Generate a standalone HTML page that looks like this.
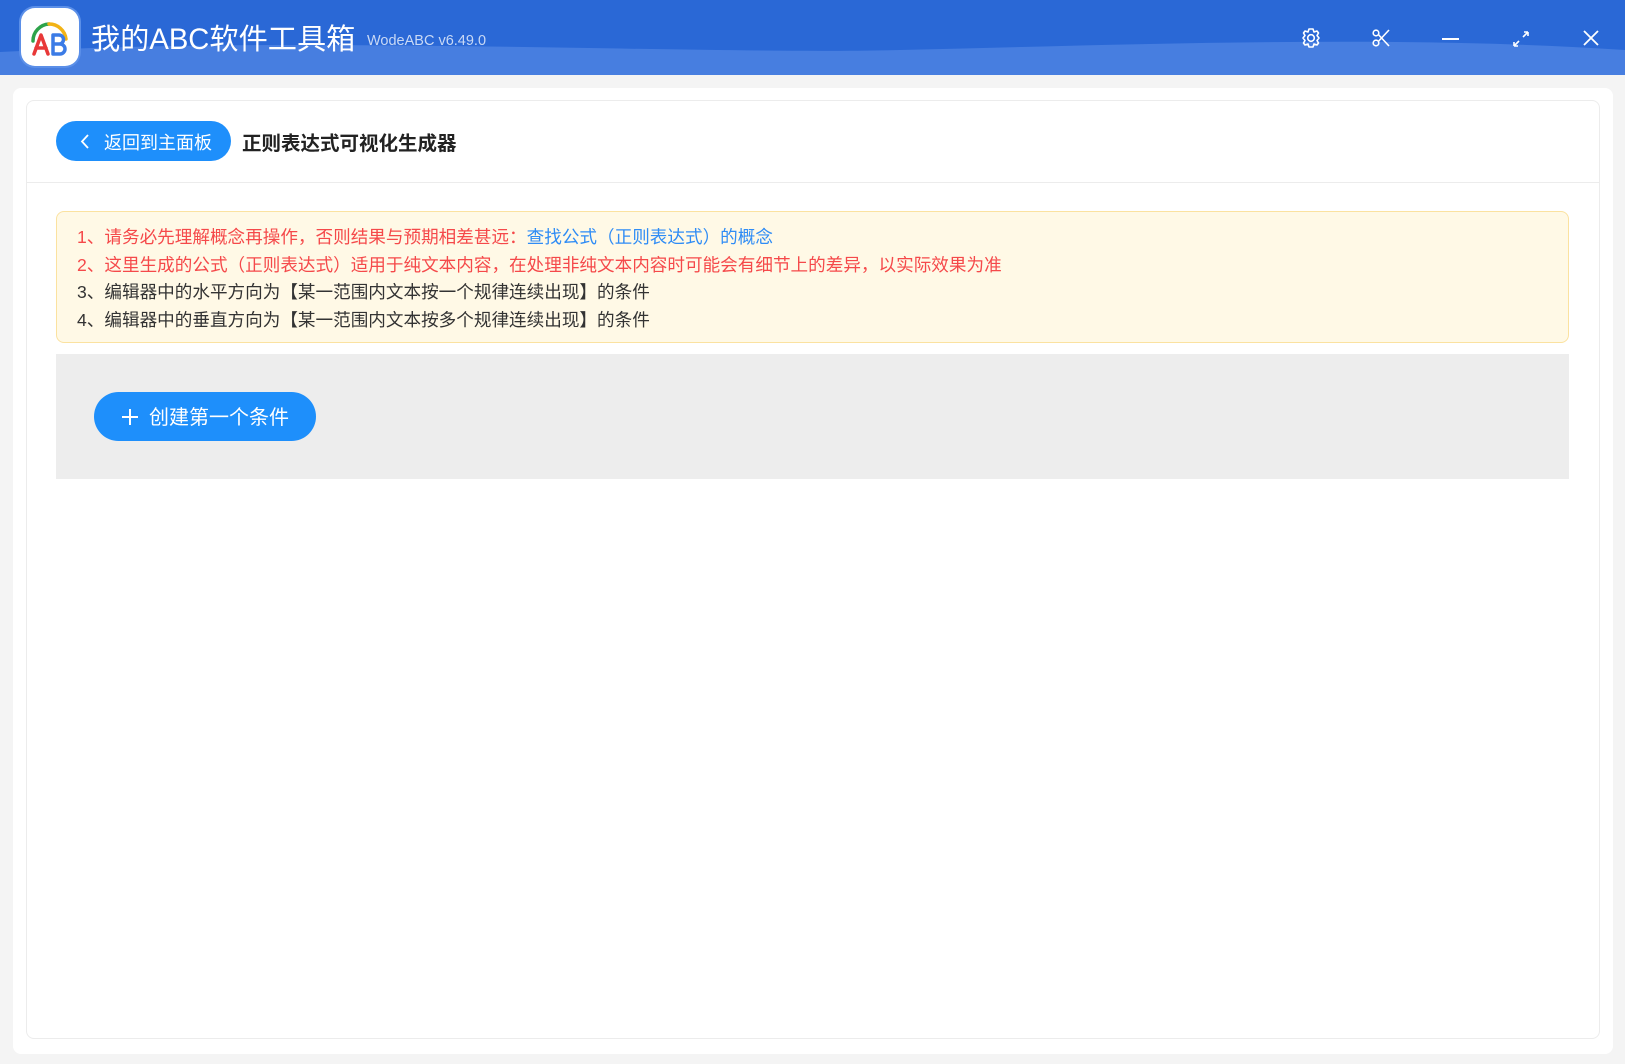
<!DOCTYPE html>
<html><head><meta charset="utf-8"><style>
*{margin:0;padding:0;box-sizing:border-box}
body{width:1625px;height:1064px;background:#f4f4f4;font-family:"Liberation Sans","Noto Sans CJK SC",sans-serif;position:relative;overflow:hidden}
.hdr{position:absolute;left:0;top:0;width:1625px;height:75px;background:#2a68d6;overflow:hidden}
.logo{position:absolute;left:21px;top:8px;width:58px;height:58px;border-radius:14px;background:#fff;box-shadow:0 0 0 2px #5b8fe8}
.t1{position:absolute;left:91px;top:20px;color:#fff;font-size:29.2px;line-height:40px}
.t2{position:absolute;left:367px;top:33px;color:#c9d9f5;font-size:14.5px}
.ic{position:absolute;top:26px}
.outer{position:absolute;left:13px;top:88px;width:1600px;height:966px;background:#fff;border-radius:8px}
.inner{position:absolute;left:26px;top:100px;width:1574px;height:939px;border:1px solid #ececec;border-radius:8px}
.back{position:absolute;left:56px;top:121px;width:175px;height:40px;border-radius:20px;background:#1e8ffb;color:#fff;font-size:18px;line-height:44px;padding-left:48px}
.title{position:absolute;left:242px;top:131px;font-size:19.5px;font-weight:bold;color:#222;line-height:26px}
.div{position:absolute;left:27px;top:182px;width:1572px;height:1px;background:#ececec}
.note{position:absolute;left:56px;top:211px;width:1513px;height:132px;background:#fff9e6;border:1px solid #fbe2a0;border-radius:8px;padding:12px 0 0 20px;font-size:17.6px;line-height:27.5px;color:#333}
.r{color:#f5494a}.b{color:#2f8cf5}
.gray{position:absolute;left:56px;top:354px;width:1513px;height:125px;background:#ededed}
.add{position:absolute;left:94px;top:392px;width:222px;height:49px;border-radius:25px;background:#1e8ffb;color:#fff;font-size:20px;line-height:52px;padding-left:55px}
</style></head><body>
<div class="hdr">
<svg width="1625" height="75" style="position:absolute;left:0;top:0"><path d="M0 52 C300 35 700 55 900 50 C1150 44 1400 35 1625 50 L1625 75 L0 75Z" fill="#477ee0"/></svg>
<div class="logo"><svg width="58" height="58" viewBox="0 0 58 58">
<path d="M12 33 A17 17 0 0 1 28 16" stroke="#2da34a" stroke-width="3.5" fill="none" stroke-linecap="round"/>
<path d="M28 16 A17 17 0 0 1 45 31" stroke="#f2b316" stroke-width="3.5" fill="none" stroke-linecap="round"/>
<path d="M13 46 L20 27 L27 46 M15 40 H25" stroke="#e83838" stroke-width="3.5" fill="none" stroke-linecap="round" stroke-linejoin="round"/>
<path d="M32 27 V46 H39 A5 5 0 0 0 39 36 H32 M32 27 H38 A4.5 4.5 0 0 1 38 36" stroke="#3b7be6" stroke-width="3.5" fill="none" stroke-linecap="round" stroke-linejoin="round"/>
</svg></div>
<div class="t1">我的ABC软件工具箱</div>
<div class="t2">WodeABC v6.49.0</div>
<svg class="ic" style="left:1300px" width="22" height="24" viewBox="0 0 22 24"><path d="M11 3 L13 3 L14 6 L17 5 L18.5 7 L17 9.5 L19 12 L17 14.5 L18.5 17 L17 19 L14 18 L13 21 L9 21 L8 18 L5 19 L3.5 17 L5 14.5 L3 12 L5 9.5 L3.5 7 L5 5 L8 6 L9 3Z" fill="none" stroke="#fff" stroke-width="1.6" stroke-linejoin="round"/><circle cx="11" cy="12" r="3.3" fill="none" stroke="#fff" stroke-width="1.6"/></svg>
<svg class="ic" style="left:1370px" width="22" height="24" viewBox="0 0 22 24"><circle cx="6" cy="7" r="2.8" fill="none" stroke="#fff" stroke-width="1.6"/><circle cx="6" cy="17" r="2.8" fill="none" stroke="#fff" stroke-width="1.6"/><path d="M8.3 8.5 L19 20 M8.3 15.5 L19 4" stroke="#fff" stroke-width="1.6"/></svg>
<div style="position:absolute;left:1442px;top:38px;width:17px;height:2px;background:#fff"></div>
<svg class="ic" style="left:1510px" width="22" height="24" viewBox="0 0 22 24"><path d="M4 20 L9 15 M4 20 V16 M4 20 H8 M18 6 L13 11 M18 6 V10 M18 6 H14" stroke="#fff" stroke-width="1.6" fill="none"/></svg>
<svg class="ic" style="left:1580px" width="22" height="24" viewBox="0 0 22 24"><path d="M4 5 L18 19 M18 5 L4 19" stroke="#fff" stroke-width="1.8"/></svg>
</div>
<div class="outer"></div>
<div class="inner"></div>
<div class="back"><svg style="position:absolute;left:24px;top:13px" width="10" height="15" viewBox="0 0 10 15"><path d="M8 1 L2 7.5 L8 14" stroke="#fff" stroke-width="1.8" fill="none"/></svg>返回到主面板</div>
<div class="title">正则表达式可视化生成器</div>
<div class="div"></div>
<div class="note">
<div class="r">1、请务必先理解概念再操作，否则结果与预期相差甚远：<span class="b">查找公式（正则表达式）的概念</span></div>
<div class="r">2、这里生成的公式（正则表达式）适用于纯文本内容，在处理非纯文本内容时可能会有细节上的差异，以实际效果为准</div>
<div>3、编辑器中的水平方向为【某一范围内文本按一个规律连续出现】的条件</div>
<div>4、编辑器中的垂直方向为【某一范围内文本按多个规律连续出现】的条件</div>
</div>
<div class="gray"></div>
<div class="add"><svg style="position:absolute;left:28px;top:17px" width="16" height="16" viewBox="0 0 16 16"><path d="M8 0 V16 M0 8 H16" stroke="#fff" stroke-width="2"/></svg>创建第一个条件</div>
</body></html>
